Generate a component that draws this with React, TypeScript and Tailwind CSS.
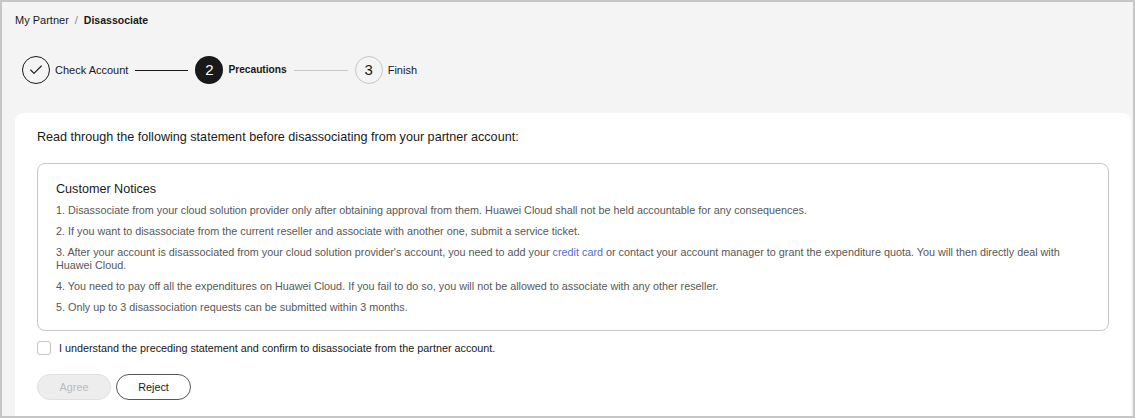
import { Check } from 'lucide-react';

const notices = [
  '1. Disassociate from your cloud solution provider only after obtaining approval from them. Huawei Cloud shall not be held accountable for any consequences.',
  '2. If you want to disassociate from the current reseller and associate with another one, submit a service ticket.',
  null,
  '4. You need to pay off all the expenditures on Huawei Cloud. If you fail to do so, you will not be allowed to associate with any other reseller.',
  '5. Only up to 3 disassociation requests can be submitted within 3 months.',
];

export default function App() {
  return (
    <div className="h-[418px] w-[1135px] overflow-hidden border-2 border-[#c6c6c6] bg-[#f4f4f4] font-['Liberation_Sans',Arial,sans-serif] text-[#191919]">
      {/* Breadcrumb */}
      <div className="flex items-center pl-[13px] pt-[11px] text-[11px] leading-[14px]">
        <span>My Partner</span>
        <span className="mx-[6px] text-[#8a8a8a]">/</span>
        <span className="text-[10.5px] font-bold">Disassociate</span>
      </div>

      {/* Steps */}
      <div className="mt-[29px] flex items-center pl-[20px] text-[11px]">
        <div className="flex h-[28px] w-[28px] items-center justify-center rounded-full border border-[#191919]">
          <Check className="h-[16px] w-[16px]" strokeWidth={1.6} />
        </div>
        <span className="ml-[5px]">Check Account</span>
        <div className="ml-[7px] mr-[7px] h-px w-[53px] bg-[#191919]" />
        <div className="flex h-[28px] w-[28px] items-center justify-center rounded-full bg-[#191919] text-[15px] text-white">
          2
        </div>
        <span className="ml-[5px] text-[10.2px] font-bold">Precautions</span>
        <div className="ml-[7px] mr-[7px] h-px w-[54px] bg-[#c6c6c6]" />
        <div className="flex h-[28px] w-[28px] items-center justify-center rounded-full border border-[#c6c6c6] text-[15px]">
          3
        </div>
        <span className="ml-[5px]">Finish</span>
      </div>

      {/* Card */}
      <div className="ml-[13px] mr-[2px] mt-[29px] h-[320px] rounded-t-[8px] bg-white px-[22px] pt-[15px]">
        <p className="text-[12.6px] leading-[18px]">
          Read through the following statement before disassociating from your partner account:
        </p>

        <div className="mt-[17px] h-[168px] rounded-[8px] border border-[#c6c6c6] px-[18px] pt-[16px]">
          <h3 className="text-[12.6px] leading-[18px]">Customer Notices</h3>
          <div className="mt-[6px] flex flex-col gap-[8px] text-[10.8px] leading-[13px] text-[#575757]">
            {notices.map((n, i) =>
              n ? (
                <p key={i}>{n}</p>
              ) : (
                <p key={i}>
                  3. After your account is disassociated from your cloud solution provider's account, you need to add
                  your <span className="text-[#526ecc]">credit card</span> or contact your account manager to grant
                  the expenditure quota. You will then directly deal with Huawei Cloud.
                </p>
              )
            )}
          </div>
        </div>

        <label className="mt-[9px] flex items-center text-[10.8px]">
          <span className="h-[14px] w-[14px] rounded-[3px] border border-[#c6c6c6] bg-white" />
          <span className="ml-[8px]">I understand the preceding statement and confirm to disassociate from the partner account.</span>
        </label>

        <div className="mt-[18px] flex gap-[5px] text-[10.8px]">
          <button className="h-[26px] w-[74px] rounded-full border border-[#e0e0e0] bg-[#ededed] text-[#bbbbbb]">
            Agree
          </button>
          <button className="h-[26px] w-[75px] rounded-full border border-[#575757] bg-white text-[#191919]">
            Reject
          </button>
        </div>
      </div>
    </div>
  );
}
